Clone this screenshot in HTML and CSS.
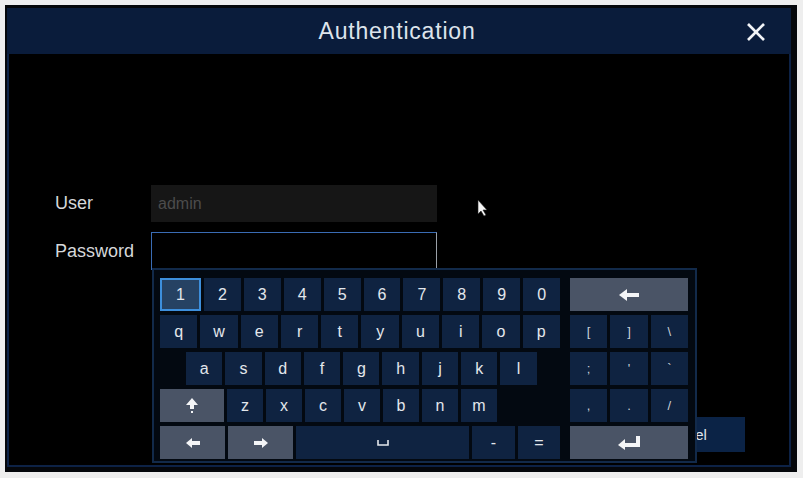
FILE: index.html
```html
<!DOCTYPE html>
<html lang="en">
<head>
  <meta charset="utf-8">
  <title>Authentication</title>
  <link rel="stylesheet" href="styles.css">
</head>
<body>
  <div class="dialog">
    <div class="titlebar">
      <span class="title">Authentication</span>
      <button class="close-btn" title="Close">
        <svg viewBox="0 0 20 20"><line x1="2" y1="2" x2="18" y2="18" /><line x1="18" y1="2" x2="2" y2="18" /></svg>
      </button>
    </div>
    <div class="dlg-body">
      <div class="form">
        <div class="form-row">
          <label class="form-label">User</label>
          <div class="field field-disabled">admin</div>
        </div>
        <div class="form-row">
          <label class="form-label">Password</label>
          <div class="field field-active"></div>
        </div>
      </div>
      <div class="footer">
        <button class="btn">OK</button>
        <button class="btn">Cancel</button>
      </div>
    </div>
  </div>

  <!-- on-screen keyboard overlay -->
  <div class="keyboard">
    <div class="kb-main">
      <div class="kb-row">
        <div class="key focus">1</div><div class="key">2</div><div class="key">3</div><div class="key">4</div><div class="key">5</div>
        <div class="key">6</div><div class="key">7</div><div class="key">8</div><div class="key">9</div><div class="key">0</div>
      </div>
      <div class="kb-row">
        <div class="key">q</div><div class="key">w</div><div class="key">e</div><div class="key">r</div><div class="key">t</div>
        <div class="key">y</div><div class="key">u</div><div class="key">i</div><div class="key">o</div><div class="key">p</div>
      </div>
      <div class="kb-row row-home">
        <div class="key">a</div><div class="key">s</div><div class="key">d</div><div class="key">f</div><div class="key">g</div>
        <div class="key">h</div><div class="key">j</div><div class="key">k</div><div class="key">l</div>
      </div>
      <div class="kb-row row-low">
        <div class="key fn k-shift">
          <svg viewBox="0 0 12 16" width="12" height="16"><polygon points="6,0 12,7 8,7 8,11 4,11 4,7 0,7" /><rect x="5" y="13" width="2" height="2" /></svg>
        </div>
        <div class="key">z</div><div class="key">x</div><div class="key">c</div><div class="key">v</div>
        <div class="key">b</div><div class="key">n</div><div class="key">m</div>
      </div>
      <div class="kb-row row-bottom">
        <div class="key fn k-arrow">
          <svg viewBox="0 0 14 10" width="14" height="10"><polygon points="0,5 6,0 6,10" /><rect x="5" y="3" width="9" height="4" /></svg>
        </div>
        <div class="key fn k-arrow">
          <svg viewBox="0 0 14 10" width="14" height="10"><polygon points="14,5 8,0 8,10" /><rect x="0" y="3" width="9" height="4" /></svg>
        </div>
        <div class="key k-space">
          <svg viewBox="0 0 12 6" width="12" height="6"><polyline points="1,0 1,5 11,5 11,0" /></svg>
        </div>
        <div class="key k-minus">-</div>
        <div class="key k-equal">=</div>
      </div>
    </div>
    <div class="kb-side">
      <div class="kb-row">
        <div class="key fn">
          <svg viewBox="0 0 20 12" width="20" height="12"><polygon points="0,6 8,0 8,12" /><rect x="7" y="4" width="13" height="4" /></svg>
        </div>
      </div>
      <div class="kb-row"><div class="key sym">[</div><div class="key sym">]</div><div class="key sym">\</div></div>
      <div class="kb-row"><div class="key sym">;</div><div class="key sym">'</div><div class="key sym">`</div></div>
      <div class="kb-row"><div class="key sym">,</div><div class="key sym">.</div><div class="key sym">/</div></div>
      <div class="kb-row">
        <div class="key fn">
          <svg viewBox="0 0 22 14" width="22" height="14"><polygon points="0,9 7,3 7,14" /><rect x="6" y="7" width="16" height="4" /><rect x="18" y="0" width="4" height="11" /></svg>
        </div>
      </div>
    </div>
  </div>

  <svg class="cursor" viewBox="0 0 11 18" width="11" height="18"><polygon points="1,1 1,15 4,12 7,17 9,16 6,11 10,11" /></svg>
</body>
</html>
```

FILE: styles.css
```css
html, body {
  margin: 0; padding: 0;
}
body {
  width: 803px; height: 478px;
  background: #eeeeee;
  font-family: 'Liberation Sans', Arial, sans-serif;
  position: relative;
  overflow: hidden;
}
.dialog {
  margin: 5px 0 0 5px;
  width: 792px; height: 467px;
  background: #05070b;
  padding: 3px 6px 5px 2px;
  box-sizing: border-box;
  display: flex; flex-direction: column;
}
.titlebar {
  height: 46px;
  flex: none;
  background: #0a1c3b;
  display: flex; align-items: center; justify-content: center;
  position: relative;
}
.title {
  color: #dde4ec;
  font-size: 23px;
  letter-spacing: 0.8px;
  padding-right: 4px;
}
.close-btn {
  position: absolute;
  right: 23px; top: 12px;
  width: 24px; height: 24px;
  border: none; background: none;
  padding: 0;
  display: flex; align-items: center; justify-content: center;
}
.close-btn svg {
  width: 20px; height: 20px;
  stroke: #f2f4f7;
  stroke-width: 2.6;
}
.dlg-body {
  flex: 1;
  background: #000;
  border: 2px solid #0d2246;
  border-top: none;
  padding: 131px 44px 13px 46px;
  display: flex; flex-direction: column;
}
.form {
  display: flex; flex-direction: column;
  gap: 10px;
}
.form-row {
  display: flex; align-items: center;
}
.form-label {
  width: 96px;
  color: #d6d8da;
  font-size: 18px;
}
.field {
  width: 286px; height: 37px;
  box-sizing: border-box;
  font-size: 16px;
  padding: 0 7px;
  display: flex; align-items: center;
}
.field-disabled {
  background: #161616;
  color: #4c4c4c;
}
.field-active {
  height: 38px;
  border: 1px solid #3a6cb4;
  border-right-color: #9aa0a8;
  background: #000;
}
.footer {
  margin-top: auto;
  display: flex; justify-content: flex-end;
  gap: 24px;
}
.btn {
  width: 123px; height: 35px;
  background: #0b2346;
  color: #dfe5ec;
  border: none;
  font-family: 'Liberation Sans', Arial, sans-serif;
  font-size: 15px;
}

/* keyboard */
.keyboard {
  position: absolute;
  left: 152px; top: 268px;
  width: 545px; height: 195px;
  box-sizing: border-box;
  background: #030911;
  border: 2px solid #122a4a;
  padding: 8px 7px 0 6px;
  display: flex; gap: 10px;
}
.kb-main { width: 400px; display: flex; flex-direction: column; gap: 4px; }
.kb-side { width: 118px; display: flex; flex-direction: column; gap: 4px; }
.kb-row {
  height: 33px;
  display: flex; gap: 3px;
}
.key {
  flex: 1;
  background: #0f2341;
  color: #e3e7ec;
  font-size: 16px;
  display: flex; align-items: center; justify-content: center;
  box-sizing: border-box;
}
.key svg { fill: #f4f5f7; display: block; }
.key.fn { background: #4a5466; }
.key.focus {
  background: #264263;
  border: 2px solid #3d8fdc;
}
.key.sym { font-size: 13px; color: #c9d0d8; }
.row-home { padding-left: 26px; }
.row-home .key { flex: none; width: 36.3px; }
.row-low .key { flex: none; width: 36px; }
.row-low .k-shift { width: 64px; }
.row-bottom .key { flex: none; }
.row-bottom .k-arrow { width: 65px; }
.row-bottom .k-space { width: 173px; }
.row-bottom .k-minus { width: 43px; }
.row-bottom .k-equal { width: 42px; }
.k-space svg { fill: none; stroke: #e3e7ec; stroke-width: 1.6; }
.cursor {
  position: absolute;
  left: 477px; top: 199px;
  fill: #f6f6f6;
  stroke: #222;
  stroke-width: 0.6;
}
```
